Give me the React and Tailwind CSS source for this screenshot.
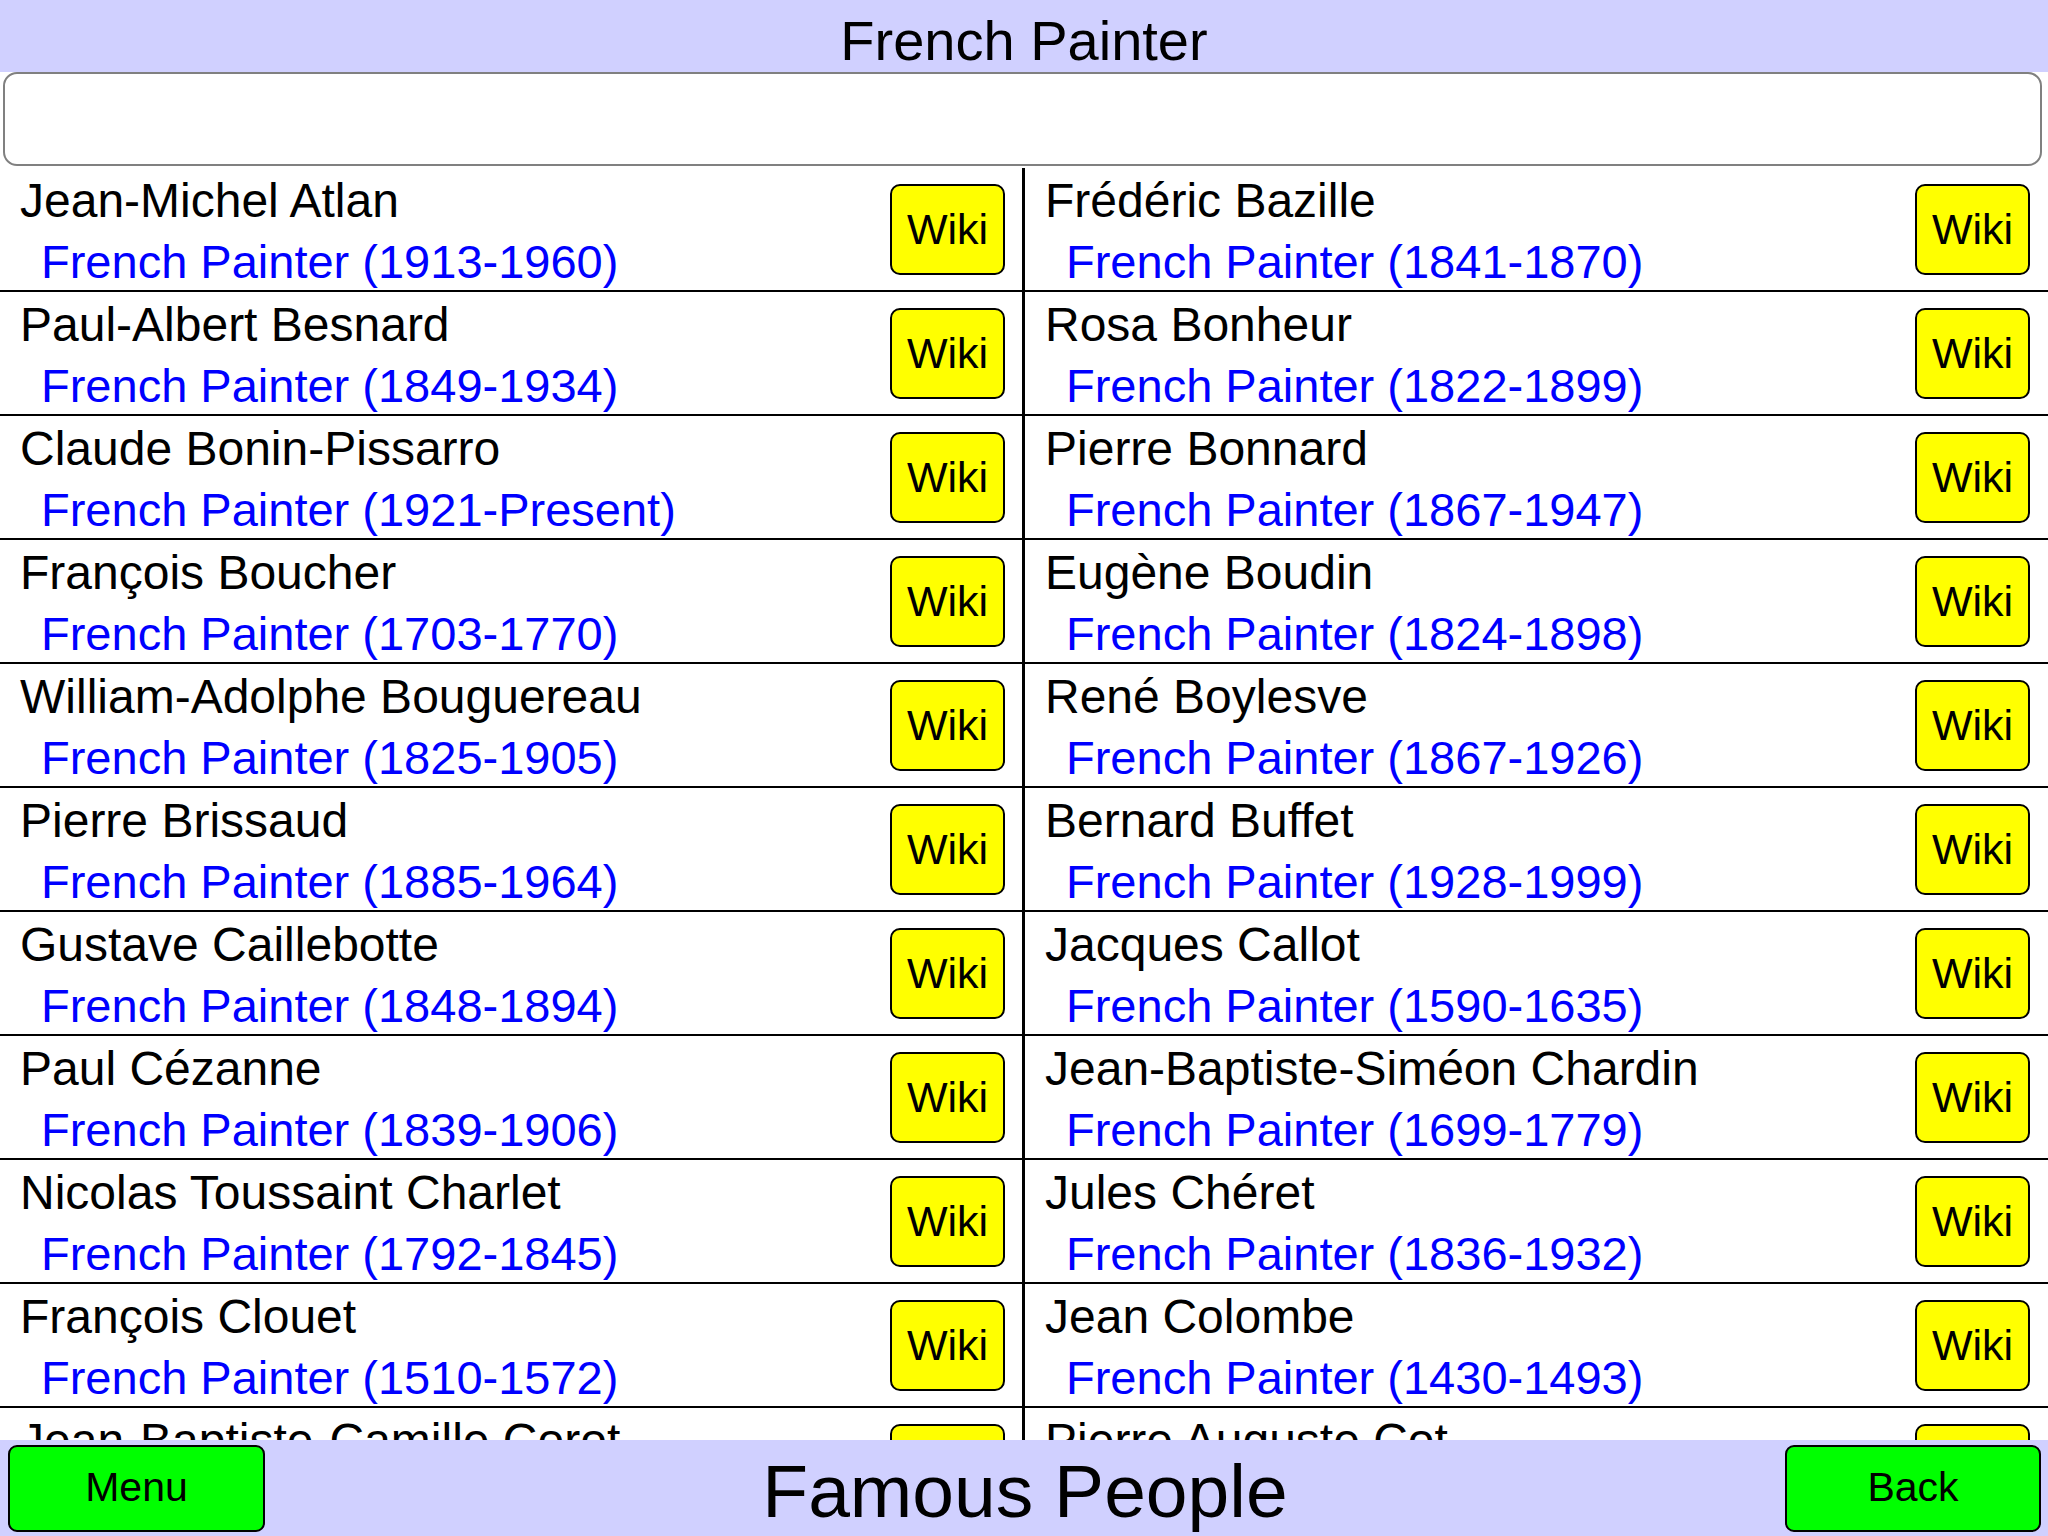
import React from "react";

const people = [
  ["Jean-Michel Atlan", "1913-1960"],
  ["Frédéric Bazille", "1841-1870"],
  ["Paul-Albert Besnard", "1849-1934"],
  ["Rosa Bonheur", "1822-1899"],
  ["Claude Bonin-Pissarro", "1921-Present"],
  ["Pierre Bonnard", "1867-1947"],
  ["François Boucher", "1703-1770"],
  ["Eugène Boudin", "1824-1898"],
  ["William-Adolphe Bouguereau", "1825-1905"],
  ["René Boylesve", "1867-1926"],
  ["Pierre Brissaud", "1885-1964"],
  ["Bernard Buffet", "1928-1999"],
  ["Gustave Caillebotte", "1848-1894"],
  ["Jacques Callot", "1590-1635"],
  ["Paul Cézanne", "1839-1906"],
  ["Jean-Baptiste-Siméon Chardin", "1699-1779"],
  ["Nicolas Toussaint Charlet", "1792-1845"],
  ["Jules Chéret", "1836-1932"],
  ["François Clouet", "1510-1572"],
  ["Jean Colombe", "1430-1493"],
  ["Jean-Baptiste-Camille Corot", "1796-1875"],
  ["Pierre Auguste Cot", "1842-1919"],
];

function Cell({ person, left }) {
  const [name, years] = person;
  return (
    <div
      className={
        left
          ? "w-[1025px] border-r-[3px] border-black flex items-start"
          : "flex-1 flex items-start"
      }
    >
      <div className="flex-1 pt-[2px] leading-[61px] whitespace-nowrap">
        <div className="pl-[20px] text-[48px] text-black">{name}</div>
        <div className="pl-[41px] text-[47px] text-[#0000ff]">French Painter ({years})</div>
      </div>
      <button
        className={
          "mt-[16px] w-[115px] h-[91px] bg-[#ffff00] border-2 border-black rounded-[10px] flex items-center justify-center text-[43px] text-black " +
          (left ? "mr-[17px]" : "mr-[18px]")
        }
      >
        Wiki
      </button>
    </div>
  );
}

export default function App() {
  const rows = [];
  for (let i = 0; i < people.length; i += 2) {
    rows.push([people[i], people[i + 1]]);
  }
  return (
    <div className="w-[2048px] h-[1536px] flex flex-col overflow-hidden bg-white font-['Liberation_Sans',Arial,Helvetica,sans-serif]">
      <div className="h-[72px] shrink-0 bg-[#d0d0ff] text-center text-[56px] leading-[62px] pt-[10px] text-black">
        French Painter
      </div>
      <div className="h-[96px] shrink-0">
        <div className="ml-[3px] w-[2039px] h-[94px] border-2 border-[#808080] rounded-[14px] bg-white"></div>
      </div>
      <div className="flex-1 overflow-hidden">
        {rows.map((r, i) => (
          <div key={i} className="flex h-[124px] border-b-2 border-black">
            <Cell person={r[0]} left />
            <Cell person={r[1]} />
          </div>
        ))}
      </div>
      <div className="h-[96px] shrink-0 bg-[#d0d0ff] flex items-center justify-between">
        <button className="ml-[8px] w-[257px] h-[87px] bg-[#00ff00] border-2 border-black rounded-[9px] flex items-center justify-center text-[41px] text-black">
          Menu
        </button>
        <div className="text-[75px] text-black pt-[6px]">Famous People</div>
        <button className="mr-[7px] w-[256px] h-[87px] bg-[#00ff00] border-2 border-black rounded-[9px] flex items-center justify-center text-[41px] text-black">
          Back
        </button>
      </div>
    </div>
  );
}
